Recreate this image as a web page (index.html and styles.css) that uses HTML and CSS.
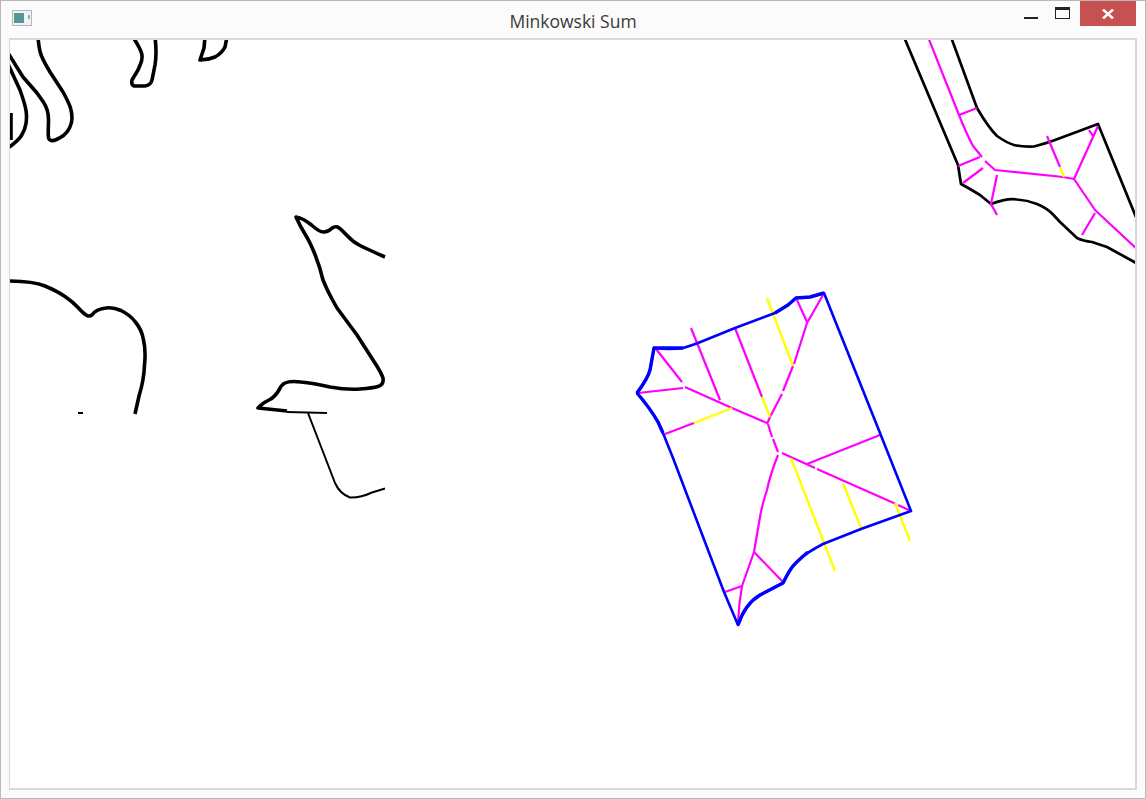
FILE: index.html
```html
<!DOCTYPE html>
<html lang="en">
  <head>
    <meta charset="UTF-8" />
    <title>Minkowski Sum</title>
    <link rel="stylesheet" href="styles.css">
  </head>
  <body>
    <div class="window">
      <div class="titlebar">
        <svg class="app-icon" viewBox="0 0 20 16" width="20" height="16">
          <rect x="0.5" y="0.5" width="19" height="15" fill="#f0f2f4" stroke="#b4b8bd" />
          <rect x="2" y="3" width="8" height="10" fill="#4f9a93" />
          <rect x="10" y="3" width="2" height="10" fill="#5f8fb0" />
          <rect x="16" y="5" width="2" height="4" fill="#7fb8a8" />
        </svg>
        <div class="title">Minkowski Sum</div>
        <div class="controls">
          <div class="ctl-min"></div>
          <div class="ctl-max"></div>
          <div class="ctl-close">
            <svg viewBox="0 0 12 10" width="12" height="10">
              <path d="M1 0.5 L11 9.5 M11 0.5 L1 9.5" />
            </svg>
          </div>
        </div>
      </div>
      <div class="canvas">
        <svg class="scene" viewBox="10 40 1125 748">
          <!-- black outlines, left -->
          <g class="outline thick">
            <path d="M38 37 Q39 50 41.5 56 Q44 62 50 72 L63 92 Q69 103 70.5 108 Q72 113 72 118 Q72 123 69.5 128 Q67 133 63.5 135.5 Q60 138 56.5 139.5 Q53 141 51 140.5 Q49 140 48.5 137.5 Q48 135 48.5 122 Q49 110 43 101.5 L37 93 L23 77 L8 53" />
            <path d="M8 64 L20 90 Q25 104 26 110.5 Q27 117 26 123.5 Q25 130 21.5 135.5 Q18 141 8 148" />
            <path d="M11 113 L11 140" />
            <path d="M133 37 Q140 48 141.5 53 Q143 58 140.5 64 L138 70 L132 80 Q131 85 134 86 L145 86 Q151 85 152 80 L155 65 Q157 53 155 37" />
            <path d="M205 37 L204 48 L200 60 Q208 60 215 57 Q222 53 225 47 L227 37" />
            <path d="M8 281 Q33 281 45 286 Q57 291 65 296.5 Q73 302 78 307.5 Q83 313 86 315 Q89 317 92 315 Q96 309 106 308 Q113 307 121 310.5 Q130 315 135 321.5 Q142 330 143.5 340 Q146 350 144.5 365 Q144 380 139 396 L135 414" />
            <path d="M385 257 Q367 249 360 245.5 Q353 242 346.5 235 Q340 228 337.5 227 Q335 226 331.5 228.5 Q328 232 324 232 Q320 232.5 311.5 225 Q303 218 296 217 Q300 226 305 234 Q310 242 315 254.5 Q320 267 323 280 Q327 290 332 299 L337 308 L357 335 L373 360 Q381 372 383 378 Q384 385 378 386.5 Q373 388 360 389 Q347 390 330 387 Q313 383 301 382 Q290 380.5 285 383 Q281 385 279 390 Q275 397 269 400 Q263 403 260.5 405.5 L258 408 L287 411" />
          </g>
          <path class="outline thin" d="M287 412 L327 413" />
          <path class="outline thin" d="M78 413 L83 413" />
          <path class="outline thin" d="M308 413 L330 470 L335 483 Q340 494 350 497.5 Q360 498 372 492.5 L385 488.5" />

          <!-- offset shape, top right -->
          <g class="outline medium">
            <path d="M904 37 L958 165 L961 184 L970 189 L980 195 L991 204 Q1007 198 1017 199.5 Q1027 200 1037 204 Q1047 208 1053.5 215 L1060 222 L1077 238 Q1083 241 1092 242 L1107 247 L1138 264" />
            <path d="M951 37 L977 108 Q988 127 997 136 Q1007 143 1014 145 Q1022 147 1034 146.5 Q1047 143 1055 140 L1098 124 L1138 222" />
          </g>
          <g class="skeleton">
            <path d="M928 37 L959 115 Q967 135 973 146 L982 157" />
            <path d="M985 161 L995 170 L1063 177 L1074 179 L1098 126" />
            <path d="M1074 179 L1095 210 L1138 250" />
            <path d="M959 115 L977 108" />
            <path d="M958 166 L980 157" />
            <path d="M963 183 L983 168" />
            <path d="M997 175 L991 204 L997 215" />
            <path d="M1047 136 L1060 167" />
            <path d="M1095 213 L1082 235" />
            <path d="M1089 130 L1093 136" />
          </g>
          <path class="yellow" d="M1060 167 L1064 177" />

          <!-- blue polygon and its skeleton -->
          <g class="skeleton">
            <path d="M656 349 L682 382" />
            <path d="M638 393 L683 388" />
            <path d="M685 387 L732 408 L767 423" />
            <path d="M665 434 L694 423" />
            <path d="M691 328 L720 400" />
            <path d="M735 328 L762 397" />
            <path d="M767 424 L770 417 L782 394" />
            <path d="M783 391 L793 366" />
            <path d="M794 364 L807 323 L823 295" />
            <path d="M797 300 L807 322" />
            <path d="M768 424 L772 437" />
            <path d="M773 439 L778 452" />
            <path d="M778 455 Q770 475 767 490 Q762 505 760 517 L754 552 L742 586 Q739 603 738 622" />
            <path d="M742 586 L725 592" />
            <path d="M754 552 L783 582" />
            <path d="M782 453 L815 468" />
            <path d="M817 469 L896 504" />
            <path d="M898 505 L911 511" />
            <path d="M807 464 L880 435" />
          </g>
          <g class="yellow">
            <path d="M694 423 L732 408" />
            <path d="M762 397 L770 417" />
            <path d="M767 298 L780 332 L793 366" />
            <path d="M791 458 L835 571" />
            <path d="M843 483 L861 528" />
            <path d="M895 503 L910 541" />
          </g>
          <path class="blue" d="M637 393 Q648 378 650 370 L654 348 Q670 350 683 348 Q690 346 698 343 L735 328 L775 313 L788 305 L796 298 L810 297 L824 293 L880 433 L911 511 L861 529 L823 544 Q808 552 801.5 557.5 Q795 563 791.5 568 Q788 573 783 583 L760 595 Q745 604 738 625 L724 592 L673 458 L663 433 L658 422 Q650 408 637 393 Z" />
          <path class="blue heavy" d="M637 393 Q648 378 650 370 L654 348 L683 348" />
          <path class="blue heavy" d="M775 313 L788 305 L796 298 L810 297 L824 293" />
          <path class="blue heavy" d="M808 552 Q795 563 791.5 568 Q788 573 783 583 L760 595 Q745 604 738 625" />
          <path class="blue heavy" d="M663 433 L658 422 Q650 408 637 393" />
        </svg>
      </div>
    </div>
  </body>
</html>
```

FILE: styles.css
```css
html,
body {
  margin: 0;
  padding: 0;
}

body {
  width: 1146px;
  height: 799px;
  overflow: hidden;
  font-family: "Open Sans", "Noto Sans", sans-serif;
}

.window {
  box-sizing: border-box;
  height: 799px;
  display: flex;
  flex-direction: column;
  background-color: #fbfbfb;
  border: 1px solid #b9b9b9;
}

.titlebar {
  height: 37px;
  display: grid;
  grid-template-columns: 1fr auto 1fr;
}

.app-icon {
  margin: 9px 0 0 11px;
}

.title {
  margin-top: 9px;
  font-size: 17.5px;
  line-height: 23px;
  color: #3a3a3a;
}

.controls {
  justify-self: end;
  display: flex;
  align-items: flex-start;
  margin-right: 9px;
}

.ctl-min {
  width: 14px;
  height: 2px;
  margin-top: 16px;
  background-color: #222;
}

.ctl-max {
  box-sizing: border-box;
  width: 15px;
  height: 12px;
  margin: 6px 10px 0 17px;
  border: 1px solid #222;
  border-top-width: 3px;
}

.ctl-close {
  width: 56px;
  height: 25px;
  display: flex;
  align-items: center;
  justify-content: center;
  background-color: #c75050;
}

.ctl-close path {
  fill: none;
  stroke: #fff;
  stroke-width: 2.4;
}

.canvas {
  flex: 1;
  margin: 0 8px 8px 8px;
  background-color: #fff;
  border: 1px solid #d8d8d8;
  border-width: 2px 2px 2px 1px;
  min-height: 0;
}

.scene {
  display: block;
  width: 100%;
  height: 100%;
}

.scene path {
  fill: none;
  stroke-linejoin: round;
}

.outline {
  stroke: #000;
}

.thick path {
  stroke-width: 3.6;
}

.medium path {
  stroke-width: 2.7;
}

.scene .thin {
  stroke-width: 2;
}

.skeleton path {
  stroke: #ff00ff;
  stroke-width: 2.2;
}

.scene .yellow,
.yellow path {
  stroke: #ffff00;
  stroke-width: 2.4;
}

.scene .blue {
  stroke: #0000ff;
  stroke-width: 2.6;
}

.scene .heavy {
  stroke-width: 3.4;
}
```
